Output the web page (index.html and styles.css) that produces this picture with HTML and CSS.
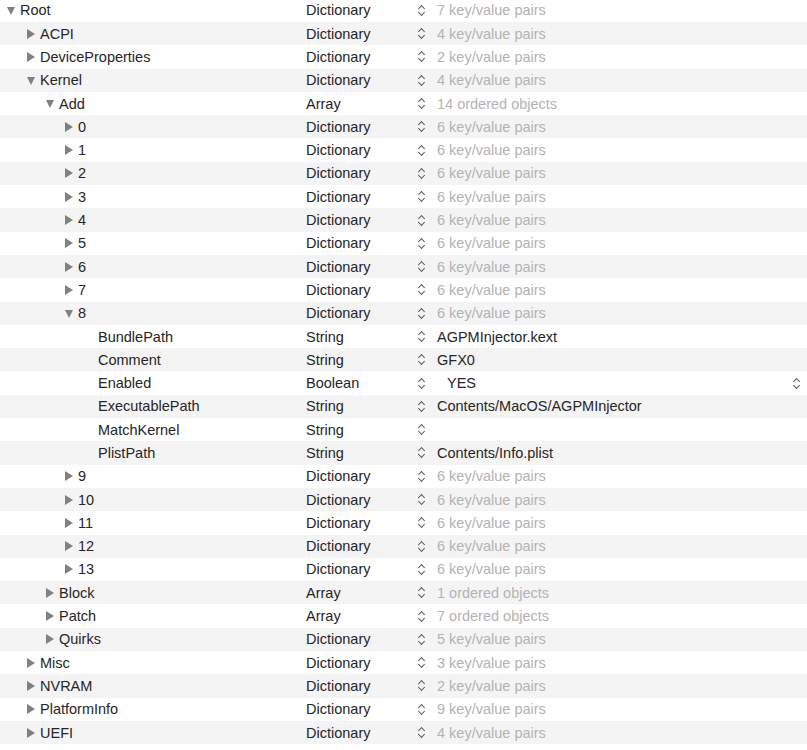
FILE: index.html
```html
<!DOCTYPE html>
<html>
<head>
<meta charset="utf-8">
<link rel="stylesheet" href="styles.css">
</head>
<body>
<div class="tree">
  <div class="row"><div class="key l0"><span class="tw down"></span>Root</div><div class="type">Dictionary</div><div class="val dim"><span class="st"></span>7 key/value pairs</div></div>
  <div class="row"><div class="key l1"><span class="tw right"></span>ACPI</div><div class="type">Dictionary</div><div class="val dim"><span class="st"></span>4 key/value pairs</div></div>
  <div class="row"><div class="key l1"><span class="tw right"></span>DeviceProperties</div><div class="type">Dictionary</div><div class="val dim"><span class="st"></span>2 key/value pairs</div></div>
  <div class="row"><div class="key l1"><span class="tw down"></span>Kernel</div><div class="type">Dictionary</div><div class="val dim"><span class="st"></span>4 key/value pairs</div></div>
  <div class="row"><div class="key l2"><span class="tw down"></span>Add</div><div class="type">Array</div><div class="val dim"><span class="st"></span>14 ordered objects</div></div>
  <div class="row"><div class="key l3"><span class="tw right"></span>0</div><div class="type">Dictionary</div><div class="val dim"><span class="st"></span>6 key/value pairs</div></div>
  <div class="row"><div class="key l3"><span class="tw right"></span>1</div><div class="type">Dictionary</div><div class="val dim"><span class="st"></span>6 key/value pairs</div></div>
  <div class="row"><div class="key l3"><span class="tw right"></span>2</div><div class="type">Dictionary</div><div class="val dim"><span class="st"></span>6 key/value pairs</div></div>
  <div class="row"><div class="key l3"><span class="tw right"></span>3</div><div class="type">Dictionary</div><div class="val dim"><span class="st"></span>6 key/value pairs</div></div>
  <div class="row"><div class="key l3"><span class="tw right"></span>4</div><div class="type">Dictionary</div><div class="val dim"><span class="st"></span>6 key/value pairs</div></div>
  <div class="row"><div class="key l3"><span class="tw right"></span>5</div><div class="type">Dictionary</div><div class="val dim"><span class="st"></span>6 key/value pairs</div></div>
  <div class="row"><div class="key l3"><span class="tw right"></span>6</div><div class="type">Dictionary</div><div class="val dim"><span class="st"></span>6 key/value pairs</div></div>
  <div class="row"><div class="key l3"><span class="tw right"></span>7</div><div class="type">Dictionary</div><div class="val dim"><span class="st"></span>6 key/value pairs</div></div>
  <div class="row"><div class="key l3"><span class="tw down"></span>8</div><div class="type">Dictionary</div><div class="val dim"><span class="st"></span>6 key/value pairs</div></div>
  <div class="row"><div class="key l4">BundlePath</div><div class="type">String</div><div class="val"><span class="st"></span>AGPMInjector.kext</div></div>
  <div class="row"><div class="key l4">Comment</div><div class="type">String</div><div class="val"><span class="st"></span>GFX0</div></div>
  <div class="row"><div class="key l4">Enabled</div><div class="type">Boolean</div><div class="val"><span class="st"></span><span class="bool">YES</span><span class="st end"></span></div></div>
  <div class="row"><div class="key l4">ExecutablePath</div><div class="type">String</div><div class="val"><span class="st"></span>Contents/MacOS/AGPMInjector</div></div>
  <div class="row"><div class="key l4">MatchKernel</div><div class="type">String</div><div class="val"><span class="st"></span></div></div>
  <div class="row"><div class="key l4">PlistPath</div><div class="type">String</div><div class="val"><span class="st"></span>Contents/Info.plist</div></div>
  <div class="row"><div class="key l3"><span class="tw right"></span>9</div><div class="type">Dictionary</div><div class="val dim"><span class="st"></span>6 key/value pairs</div></div>
  <div class="row"><div class="key l3"><span class="tw right"></span>10</div><div class="type">Dictionary</div><div class="val dim"><span class="st"></span>6 key/value pairs</div></div>
  <div class="row"><div class="key l3"><span class="tw right"></span>11</div><div class="type">Dictionary</div><div class="val dim"><span class="st"></span>6 key/value pairs</div></div>
  <div class="row"><div class="key l3"><span class="tw right"></span>12</div><div class="type">Dictionary</div><div class="val dim"><span class="st"></span>6 key/value pairs</div></div>
  <div class="row"><div class="key l3"><span class="tw right"></span>13</div><div class="type">Dictionary</div><div class="val dim"><span class="st"></span>6 key/value pairs</div></div>
  <div class="row"><div class="key l2"><span class="tw right"></span>Block</div><div class="type">Array</div><div class="val dim"><span class="st"></span>1 ordered objects</div></div>
  <div class="row"><div class="key l2"><span class="tw right"></span>Patch</div><div class="type">Array</div><div class="val dim"><span class="st"></span>7 ordered objects</div></div>
  <div class="row"><div class="key l2"><span class="tw right"></span>Quirks</div><div class="type">Dictionary</div><div class="val dim"><span class="st"></span>5 key/value pairs</div></div>
  <div class="row"><div class="key l1"><span class="tw right"></span>Misc</div><div class="type">Dictionary</div><div class="val dim"><span class="st"></span>3 key/value pairs</div></div>
  <div class="row"><div class="key l1"><span class="tw right"></span>NVRAM</div><div class="type">Dictionary</div><div class="val dim"><span class="st"></span>2 key/value pairs</div></div>
  <div class="row"><div class="key l1"><span class="tw right"></span>PlatformInfo</div><div class="type">Dictionary</div><div class="val dim"><span class="st"></span>9 key/value pairs</div></div>
  <div class="row"><div class="key l1"><span class="tw right"></span>UEFI</div><div class="type">Dictionary</div><div class="val dim"><span class="st"></span>4 key/value pairs</div></div>
</div>
</body>
</html>
```
FILE: styles.css
```css
html, body {
  margin: 0;
  padding: 0;
  background: #ffffff;
}
body {
  font-family: "Liberation Sans", Arial, sans-serif;
  font-size: 14.5px;
  color: #262626;
  overflow: hidden;
}
.tree {
  margin-top: -1.3px;
}
.row {
  display: grid;
  grid-template-columns: 306px 111px 1fr;
  height: 23.3px;
  align-items: center;
  white-space: nowrap;
}
.row:nth-child(even) {
  background: #f4f4f5;
}
.key {
  display: flex;
  align-items: center;
  position: relative;
}
.l0 { padding-left: 20px; }
.l1 { padding-left: 40px; }
.l2 { padding-left: 59px; }
.l3 { padding-left: 78px; }
.l4 { padding-left: 98px; }
.tw {
  position: absolute;
  width: 0;
  height: 0;
  top: 50%;
}
.tw.down {
  margin-left: -13.5px;
  margin-top: -3.5px;
  border-left: 4.5px solid transparent;
  border-right: 4.5px solid transparent;
  border-top: 8px solid #808080;
}
.tw.right {
  margin-left: -13px;
  margin-top: -5px;
  border-top: 5px solid transparent;
  border-bottom: 5px solid transparent;
  border-left: 8px solid #808080;
}
.val {
  display: flex;
  align-items: center;
}
.val.dim {
  color: #b3b3b3;
}
.st {
  display: inline-block;
  width: 9px;
  height: 12px;
  margin-right: 11px;
  flex: none;
  position: relative;
}
.st::before, .st::after {
  content: "";
  position: absolute;
  left: 2px;
  width: 4px;
  height: 4px;
  border-left: 1.4px solid #5a5a5a;
  border-top: 1.4px solid #5a5a5a;
}
.st::before {
  top: 1.5px;
  transform: rotate(45deg);
}
.st::after {
  bottom: 1.5px;
  transform: rotate(225deg);
}
.bool {
  margin-left: 10px;
  flex: 1;
}
.st.end {
  margin-right: 6px;
}
```
